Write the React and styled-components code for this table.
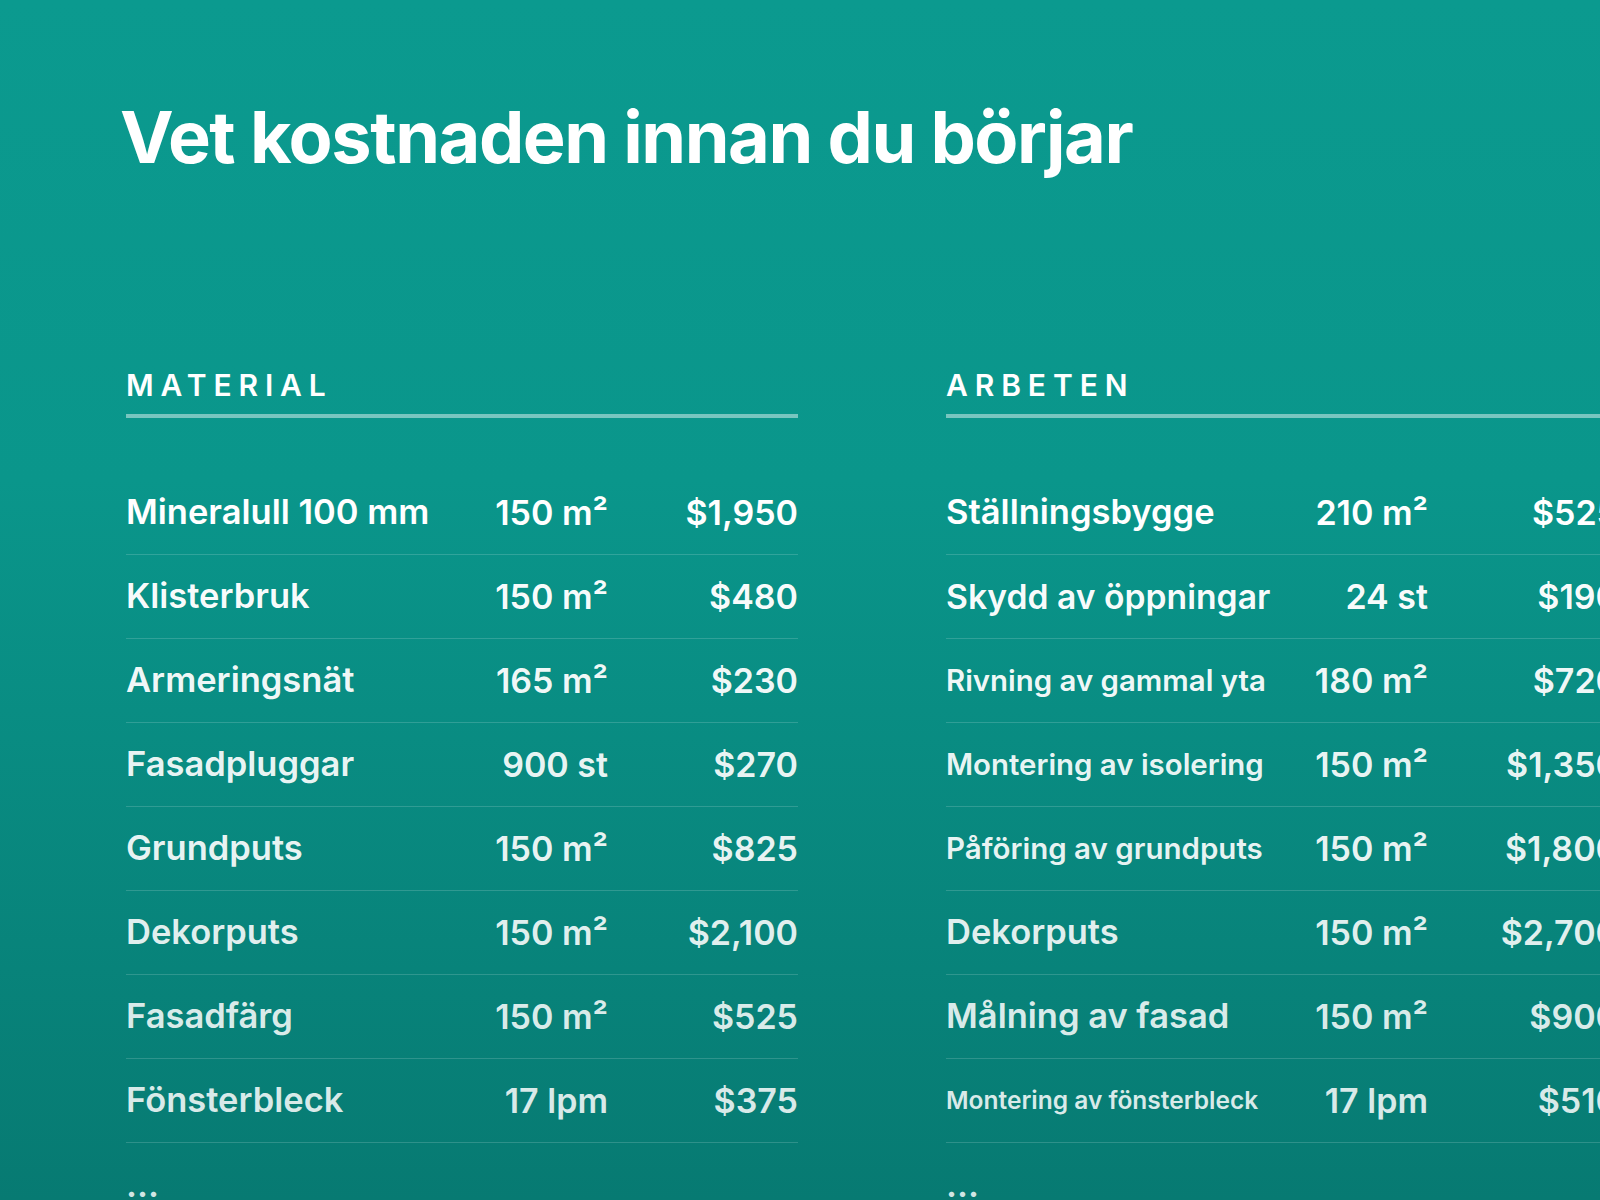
import React from "react";
import styled, { createGlobalStyle } from "styled-components";

const Global = createGlobalStyle`
  html, body { margin: 0; padding: 0; }
  body { font-family: Inter, "Noto Sans", "Liberation Sans", sans-serif; }
  * { box-sizing: border-box; }
`;

const Page = styled.div`
  width: 1600px;
  height: 1200px;
  overflow: hidden;
  background: linear-gradient(180deg, #0b9a8f 0%, #0a968b 40%, #077a72 100%);
  padding: 101px 0 0 126px;
  color: #fff;
`;

const Title = styled.h1`
  margin: 0 0 0 -6px;
  font-size: 72px;
  line-height: 1;
  font-weight: 700;
  letter-spacing: -0.02em;
  color: #fff;
  white-space: nowrap;
`;

const Columns = styled.div`
  display: flex;
  gap: 148px;
  margin-top: 197px;
`;

const Column = styled.section`
  flex: 0 0 672px;
  width: 672px;
`;

const Heading = styled.h2`
  margin: 0;
  font-size: 30px;
  line-height: 1;
  font-weight: 600;
  letter-spacing: 0.23em;
  padding-bottom: 14px;
  border-bottom: 4px solid rgba(255, 255, 255, 0.45);
  color: #fff;
`;

const List = styled.div`
  margin-top: 53px;
  display: flex;
  flex-direction: column;
`;

const Row = styled.div`
  height: 84px;
  display: grid;
  grid-template-columns: minmax(0, 1fr) 160px 190px;
  align-items: center;
  border-bottom: ${(p) => (p.$last ? "none" : "1px solid rgba(255, 255, 255, 0.16)")};
  color: ${(p) => `rgba(255, 255, 255, ${1 - p.$i * 0.022})`};
  font-weight: 600;
  font-size: 34px;
  line-height: 1;
  letter-spacing: 0;
  white-space: nowrap;
`;

const Name = styled.span`
  font-size: ${(p) => p.$size || 34.5}px;
  overflow: visible;
`;

const Qty = styled.span`
  text-align: right;
`;

const Price = styled.span`
  text-align: right;
`;

const material = [
  ["Mineralull 100 mm", "150 m²", "$1,950"],
  ["Klisterbruk", "150 m²", "$480"],
  ["Armeringsnät", "165 m²", "$230"],
  ["Fasadpluggar", "900 st", "$270"],
  ["Grundputs", "150 m²", "$825"],
  ["Dekorputs", "150 m²", "$2,100"],
  ["Fasadfärg", "150 m²", "$525"],
  ["Fönsterbleck", "17 lpm", "$375"],
];

const arbeten = [
  ["Ställningsbygge", "210 m²", "$525"],
  ["Skydd av öppningar", "24 st", "$190", 33.7],
  ["Rivning av gammal yta", "180 m²", "$720", 29.4],
  ["Montering av isolering", "150 m²", "$1,350", 29.4],
  ["Påföring av grundputs", "150 m²", "$1,800", 29.5],
  ["Dekorputs", "150 m²", "$2,700"],
  ["Målning av fasad", "150 m²", "$900"],
  ["Montering av fönsterbleck", "17 lpm", "$510", 24.5],
];

function Table({ title, rows }) {
  return (
    <Column>
      <Heading>{title}</Heading>
      <List>
        {rows.map(([name, qty, price, size], i) => (
          <Row key={name + i} $i={i}>
            <Name $size={size}>{name}</Name>
            <Qty>{qty}</Qty>
            <Price>{price}</Price>
          </Row>
        ))}
        <Row $i={rows.length} $last>
          <Name>...</Name>
        </Row>
      </List>
    </Column>
  );
}

export default function App() {
  return (
    <>
      <Global />
      <Page>
        <Title>Vet kostnaden innan du börjar</Title>
        <Columns>
          <Table title="MATERIAL" rows={material} />
          <Table title="ARBETEN" rows={arbeten} />
        </Columns>
      </Page>
    </>
  );
}
